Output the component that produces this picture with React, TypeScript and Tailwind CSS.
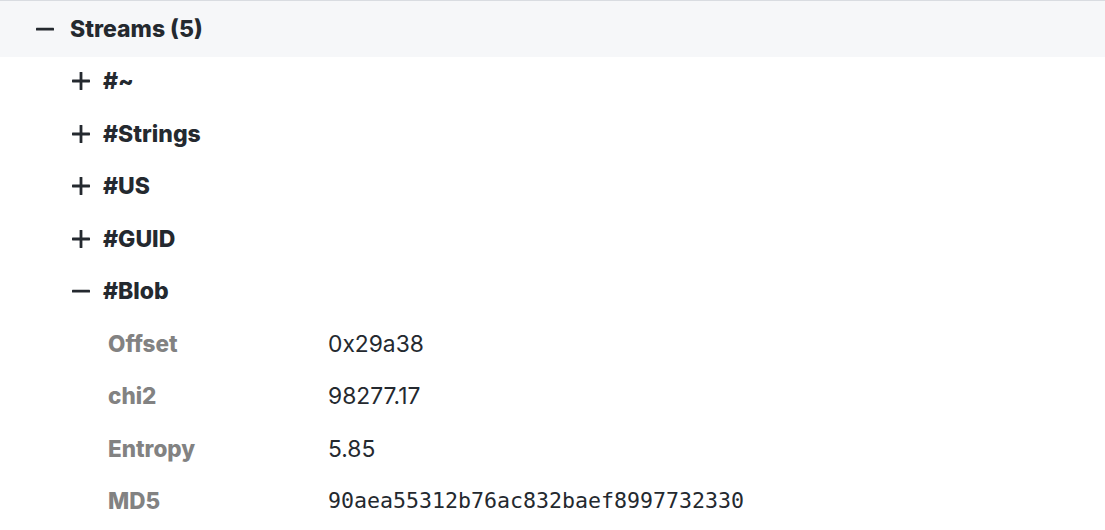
import React from "react";

const Minus = () => (
  <svg width="18" height="18" viewBox="0 0 18 18" className="shrink-0">
    <rect x="0" y="7.8" width="18" height="2.8" rx="0.6" fill="#24292f" />
  </svg>
);
const Plus = () => (
  <svg width="18" height="18" viewBox="0 0 18 18" className="shrink-0">
    <rect x="0" y="7.6" width="18" height="2.8" rx="0.6" fill="#24292f" />
    <rect x="7.6" y="0" width="2.8" height="18" rx="0.6" fill="#24292f" />
  </svg>
);

const sans = { fontFamily: "Inter, 'Noto Sans', sans-serif" };

function Child({ name, open }: { name: string; open?: boolean }) {
  return (
    <div className="flex h-[52.5px] items-center pl-[72px]">
      {open ? <Minus /> : <Plus />}
      <span className="ml-[13px] text-[23px] font-extrabold text-[#24292f]">{name}</span>
    </div>
  );
}

function Detail({ label, value, mono }: { label: string; value: string; mono?: boolean }) {
  return (
    <div className="flex h-[52.5px] items-center pl-[108px]">
      <span className="w-[220px] shrink-0 text-[22.5px] font-extrabold text-[#828282]">{label}</span>
      <span
        className={mono ? "text-[21.6px] text-[#24292f]" : "text-[22.8px] text-[#24292f]"}
        style={mono ? { fontFamily: "'DejaVu Sans Mono', monospace" } : undefined}
      >
        {value}
      </span>
    </div>
  );
}

export default function App() {
  return (
    <div className="h-[530px] w-[1105px] overflow-hidden bg-white" style={sans}>
      <div className="flex h-[57px] items-center border-t border-[#d9dce1] bg-[#f6f7f9] pl-[36px]">
        <Minus />
        <span className="ml-[16px] text-[23px] font-extrabold text-[#24292f]">Streams (5)</span>
      </div>
      <div className="-mt-[2px]">
        <Child name="#~" />
        <Child name="#Strings" />
        <Child name="#US" />
        <Child name="#GUID" />
        <Child name="#Blob" open />
        <Detail label="Offset" value="0x29a38" />
        <Detail label="chi2" value="98277.17" />
        <Detail label="Entropy" value="5.85" />
        <Detail label="MD5" value="90aea55312b76ac832baef8997732330" mono />
      </div>
    </div>
  );
}
